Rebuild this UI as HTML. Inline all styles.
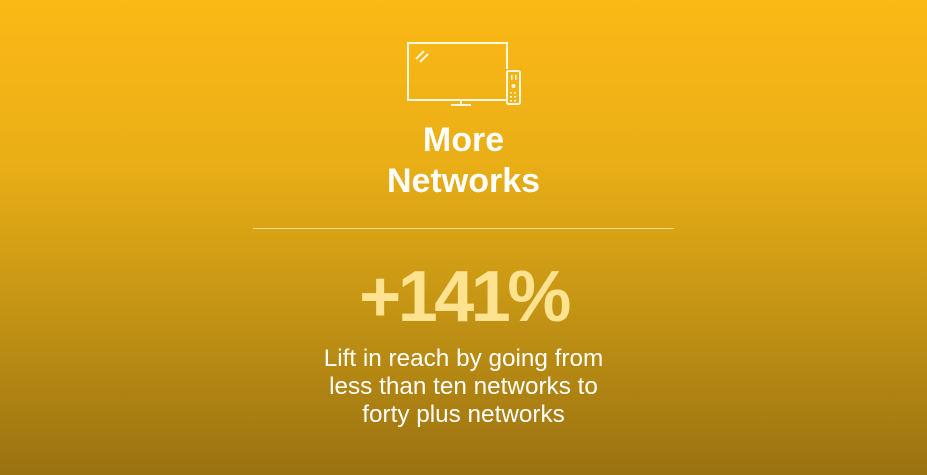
<!DOCTYPE html>
<html><head><style>
html,body{margin:0;padding:0}
body{width:927px;height:475px;overflow:hidden;background:linear-gradient(180deg,#fcb915 0%,#e9ae16 35%,#c49414 65%,#9a7210 100%);font-family:"Liberation Sans",sans-serif;position:relative;color:#fff}
.t{position:absolute;left:0;width:927px;text-align:center}
</style></head><body>
<svg style="position:absolute;left:0;top:0" width="927" height="475">
<g fill="none" stroke="#fff7e0" stroke-width="2">
<path d="M507 69 V43 H408 V100 H506"/>
<path d="M461 100 V104 M451 105 H471"/>
<path d="M416 59 L424 51 M420 62 L428 54"/>
<rect x="507" y="71" width="13" height="33" rx="1.5"/>
</g>
<g fill="#fff7e0">
<rect x="511" y="75" width="1.5" height="5"/><rect x="515" y="75" width="1.5" height="5"/>
<circle cx="513.5" cy="86" r="2"/>
<rect x="510" y="92" width="2" height="1.5"/><rect x="514" y="92" width="2" height="1.5"/>
<rect x="510" y="96" width="2" height="1.5"/><rect x="514" y="96" width="2" height="1.5"/>
<rect x="510" y="100" width="2" height="1.5"/><rect x="514" y="100" width="2" height="1.5"/>
</g>
<line x1="253" y1="228.5" x2="674" y2="228.5" stroke="#f7dc8f" stroke-width="1"/>
</svg>
<div class="t" style="top:120px;font-size:34px;font-weight:bold;line-height:41px">More<br>Networks</div>
<div class="t" style="top:252px;font-size:72px;font-weight:bold;color:#fde28f;letter-spacing:-3.5px;line-height:90px">+141%</div>
<div class="t" style="top:345px;font-size:24.3px;line-height:28px">Lift in reach by going from<br>less than ten networks to<br>forty plus networks</div>
</body></html>
